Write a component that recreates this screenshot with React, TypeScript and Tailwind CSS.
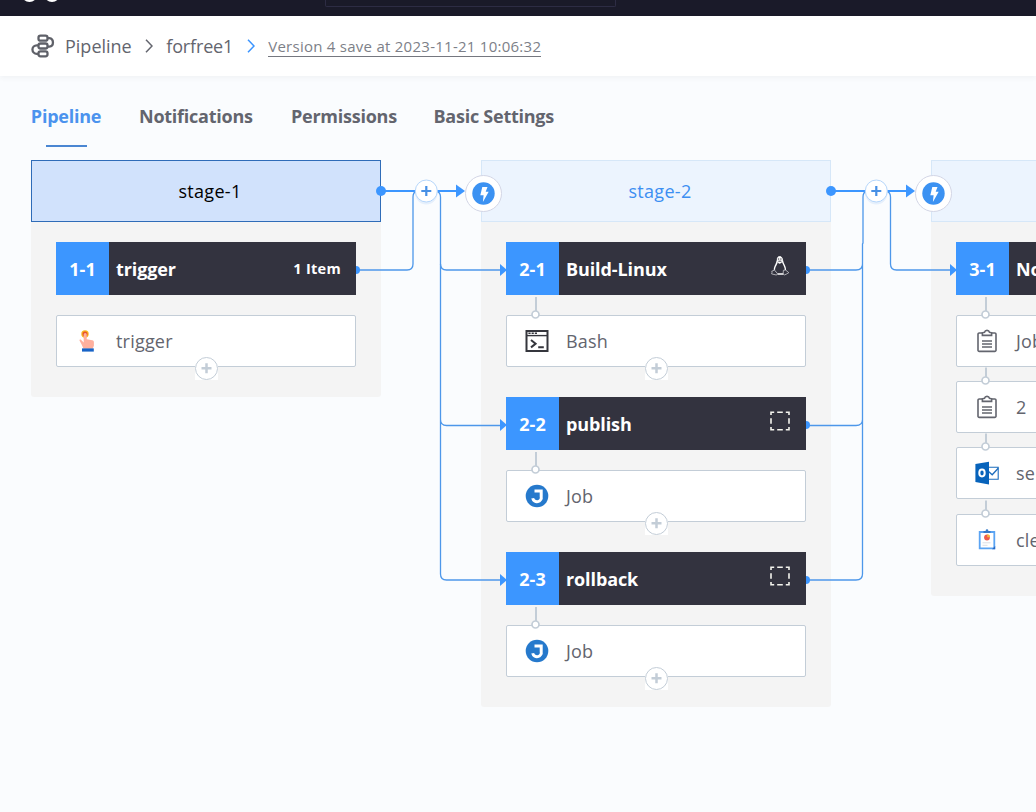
import React from "react";

type IconName = "touch" | "terminal" | "jenkins" | "clipboard" | "outlook" | "report";
type Step = { label: string; icon: IconName };
type Job = { id: string; name: string; note?: string; os?: "linux" | "box"; addable?: boolean; linked?: boolean; steps: Step[] };
type Stage = { name: string; active?: boolean; jobs: Job[] };

const stages: Stage[] = [
  {
    name: "stage-1",
    active: true,
    jobs: [{ id: "1-1", name: "trigger", note: "1 Item", addable: true, steps: [{ label: "trigger", icon: "touch" }] }],
  },
  {
    name: "stage-2",
    jobs: [
      { id: "2-1", name: "Build-Linux", os: "linux", addable: true, linked: true, steps: [{ label: "Bash", icon: "terminal" }] },
      { id: "2-2", name: "publish", os: "box", addable: true, linked: true, steps: [{ label: "Job", icon: "jenkins" }] },
      { id: "2-3", name: "rollback", os: "box", addable: true, linked: true, steps: [{ label: "Job", icon: "jenkins" }] },
    ],
  },
  {
    name: "stage-3",
    jobs: [
      {
        id: "3-1",
        name: "Notice",
        linked: true,
        steps: [
          { label: "Job", icon: "clipboard" },
          { label: "2", icon: "clipboard" },
          { label: "send", icon: "outlook" },
          { label: "clean", icon: "report" },
        ],
      },
    ],
  },
];

function PipelineLogo() {
  return (
    <svg width="24" height="24" viewBox="0 0 24 24" fill="none" stroke="#5f6169" strokeWidth="2.300">
      <rect x="7.500" y="1.700" width="9" height="5" rx="2" />
      <rect x="7.500" y="9.500" width="9" height="5" rx="2" />
      <rect x="7.500" y="17.300" width="9" height="5" rx="2" />
      <path d="M16.500 4.200h1.800a4.300 4.300 0 0 1 0 8.500h-1.800M7.500 11.300H5.700a4.250 4.250 0 0 0 0 8.500h1.800" />
    </svg>
  );
}

function Chevron({ blue }: { blue?: boolean }) {
  return (
    <svg width="8" height="14" viewBox="0 0 8 14" fill="none" stroke={blue ? "#3a94ff" : "#63656e"} strokeWidth="1.500">
      <path d="M1 .8L7 7l-6 6.200" />
    </svg>
  );
}

function StepIcon({ name }: { name: IconName }) {
  switch (name) {
    case "touch":
      return (
        <svg width="24" height="24" viewBox="0 0 24 24">
          <circle cx="10" cy="5" r="3.700" fill="#f9b41c" />
          <circle cx="10" cy="5" r="2.500" fill="#e8542c" />
          <path d="M8.700 5.400a1.500 1.500 0 0 1 3 0v4.800l5.600 1.100c1.200.3 1.600 1 1.600 2v3.400l-1.200 3H8.500L6.400 15 4.600 11.700c-.5-1 .8-1.500 1.600-.8l2.500 2.500z" fill="#ffb09e" />
          <path d="M7 19.400h11.800v3.200H7z" fill="#1763c7" />
        </svg>
      );
    case "terminal":
      return (
        <svg width="24" height="24" viewBox="0 0 24 24" fill="none" stroke="#35363d" strokeWidth="2">
          <path d="M1.500 2h21v20h-21z" />
          <path d="M1 6.600h22" strokeWidth="1.400" />
          <path d="M3.400 4.300h9" strokeWidth="1.600" strokeDasharray="2.200 1" />
          <path d="M6 11l4.600 3.700L6 18.400M13.200 18.200h5.600" />
        </svg>
      );
    case "jenkins":
      return (
        <svg width="24" height="24" viewBox="0 0 24 24">
          <circle cx="12" cy="12" r="11.300" fill="#2679cc" />
          <path d="M9.500 6.900h6.700v5.600a4.100 4.100 0 0 1-8.500 1.800" fill="none" stroke="#fff" strokeWidth="3" />
        </svg>
      );
    case "clipboard":
      return (
        <svg width="24" height="24" viewBox="0 0 24 24" fill="none" stroke="#63656e" strokeWidth="1.600">
          <path d="M7.400 4H4.200a1.200 1.200 0 0 0-1.200 1.200v16a1.200 1.200 0 0 0 1.200 1.200h15.600a1.200 1.200 0 0 0 1.200-1.200v-16A1.200 1.200 0 0 0 19.800 4h-3.200" />
          <path d="M7.400 6.400V3.800l2-.4c.4-1.300 1.300-2 2.600-2s2.200.7 2.600 2l2 .4v2.600z" />
          <path d="M7 12h10M7 15h10M7 18h10" />
        </svg>
      );
    case "outlook":
      return (
        <svg width="24" height="24" viewBox="0 0 24 24">
          <path d="M13 6.200h10.200v12H13z" fill="#fff" stroke="#1b6cbd" strokeWidth="1.100" />
          <path d="M13 10l4.200 3.800 6-6.600" fill="none" stroke="#1b6cbd" strokeWidth="1.300" />
          <path d="M.4 3L14 .8v22.700L.4 21z" fill="#0763bb" />
          <ellipse cx="7" cy="12" rx="2.700" ry="3.400" fill="none" stroke="#fff" strokeWidth="2" />
        </svg>
      );
    case "report":
      return (
        <svg width="24" height="24" viewBox="0 0 24 24">
          <path d="M4.700 4h14.600v16.400H4.700z" fill="#fff" stroke="#5ba4f3" strokeWidth="1.800" />
          <path d="M8.500 3h7v2h-7z" fill="#3679c9" />
          <circle cx="12" cy="2.600" r="1.300" fill="#3679c9" />
          <circle cx="12" cy="9.500" r="2.900" fill="#ef5b4c" />
          <path d="M12.200 9.300V6.200A3 3 0 0 1 15 9.300z" fill="#f6b73c" />
          <path d="M7.500 14.800h8M7.500 17.300h5" stroke="#dcdfe5" strokeWidth="1" />
          <path d="M17 21.300l3.200-3.200v3.200z" fill="#2769c5" />
        </svg>
      );
  }
}

function OsIcon({ os }: { os: "linux" | "box" }) {
  if (os === "box") {
    return (
      <svg className="mb-[6px]" width="20" height="20" viewBox="0 0 20 20" fill="none" stroke="#f4f4ee" strokeWidth="1.600">
        <path d="M1 4V1.300h3.200M7.200 1.300h5.600M15.800 1.300H19V4M19 7.200v5.600M19 16v2.700h-3.200M12.800 18.700H7.200M4.200 18.700H1V16M1 12.800V7.200" />
      </svg>
    );
  }
  return (
    <svg className="mb-[6px]" width="20" height="22" viewBox="0 0 20 22" fill="none" stroke="#fff" strokeWidth="1">
      <path d="M7.400 5.500C7 2.800 7.900 1.600 9.700 1.600s2.800 1.300 2.700 3.800z" fill="#fff" />
      <path d="M7.200 5.500c.2 2.200-1 3.500-2 5.800-.6 1.400-.9 2.600-.8 3.600M12.500 5.400c0 2.400 1.200 3.500 2.200 6 .7 1.700.9 2.400.7 3.600M7.500 19h5.800" strokeWidth="1.400" />
      <path d="M7.400 5.400l.5 2.100 1.700.9 1.900-.9.800-2.100z" fill="#fff" strokeWidth=".6" />
      <path d="M4.400 15l2.800 3.200c.5.9-.1 1.800-1.300 1.700l-4.300-1 .4-1.300-.2-1.500 1.200-.3zM15.600 15.100l-2.200.2-.3 3.900 1.300.7 1.800-.7 2.600-1.500-1.700-1.500z" strokeWidth=".75" stroke="#d5d5da" />
      <path d="M8.700 3.300v1.500M10.900 3.300v1.500M8.300 6.200h3" stroke="#33333f" strokeWidth=".9" />
    </svg>
  );
}

function JobView({ job }: { job: Job }) {
  return (
    <div className="w-[300px]">
      <div className="flex h-[53px] bg-[#33333f] text-[18px] font-bold text-white">
        <div className="flex w-[53px] shrink-0 items-center justify-center bg-[#3c96ff] pt-px">{job.id}</div>
        <div className="flex min-w-0 flex-1 items-center justify-between pr-[15px] pl-[7px]">
          <span className="pt-px tracking-[-0.100px] whitespace-nowrap">{job.name}</span>
          {job.note && <span className="pt-px text-[14.500px] tracking-[0.300px]">{job.note}</span>}
          {job.os && <span className="mr-[1px]"><OsIcon os={job.os} /></span>}
        </div>
      </div>
      <div className="flex flex-col gap-[14.200px] pt-5">
        {job.steps.map((step, i) => (
          <div key={i} className="relative flex h-[52px] items-center rounded-[2px] border border-[#c3cdd7] bg-white pl-[17.500px] text-[18px] text-[#63656e]">
            <StepIcon name={step.icon} />
            <span className="ml-[17.500px] pt-px tracking-[0.200px] whitespace-nowrap">{step.label}</span>
            {job.linked && (
              <svg className="absolute -top-5 left-[24px]" width="10" height="24" viewBox="0 0 10 24" fill="none" stroke="#c3cdd7" strokeWidth="2">
                <path d={i === 0 ? "M5 1v14" : "M5 5.500v9.500"} />
                <circle cx="4.500" cy="18.500" r="3.500" fill="#fff" strokeWidth="1.700" />
              </svg>
            )}
            {job.addable && (
              <svg className="absolute top-[40px] left-[138px] bg-white" width="23" height="24" viewBox="0 0 23 24" fill="#fff" stroke="#c3cdd7">
                <path d="M0 0h23v11H0z" stroke="none" />
                <circle cx="11.500" cy="12.500" r="11" />
                <path d="M6.500 12.200h10M11.500 7.200v10" strokeWidth="2.500" />
              </svg>
            )}
          </div>
        ))}
      </div>
    </div>
  );
}

function StageLink({ x }: { x: number }) {
  return (
    <g>
      <path d={`M${x} 191h77`} stroke="#3c96ff" strokeWidth="2" />
      <circle cx={x} cy="191" r="5" fill="#3c96ff" />
      <path d={`M${x + 75} 184.500l9 6.500-9 6.500z`} fill="#3c96ff" />
      <circle cx={x + 45.300} cy="193.500" r="11" fill="#d8e8fa" opacity=".6" />
      <circle cx={x + 45.300} cy="191" r="11" fill="#fff" stroke="#b5d6fb" />
      <path d={`M${x + 40.300} 191h10M${x + 45.300} 186v10`} stroke="#4790e5" strokeWidth="2.200" />
      <circle cx={x + 102.500} cy="193.500" r="18" fill="#fff" stroke="#d3d6e6" />
      <circle cx={x + 102.500} cy="193.500" r="11.200" fill="#3c92f2" />
      <path d={`M${x + 101.300} 187h5.200l-1.800 4.700h3l-5.800 10.300.7-6.800h-3.300z`} fill="#fff" />
    </g>
  );
}

function Connectors() {
  const stage2Rows = [270, 425, 580];
  return (
    <svg className="pointer-events-none absolute inset-0" width="1036" height="652" viewBox="0 160 1036 652" fill="none">
      <g stroke="#4d97ea" strokeWidth="1.300">
        <path d="M358 270h49q6 0 6-6v-67q0-5 4-6" />
        <path d="M436 191q4.500 1 4.500 6v67q0 6 6 6h54" />
        <path d="M440.500 264v155.500q0 6 6 6h54M440.500 419v155q0 6 6 6h54" />
        <path d="M807 270h49q6.500 0 6.500-6M807 425.500h49q6.500 0 6.500-6M807 580h49q6.500 0 6.500-6V244l.5-1v-46q0-5 4-6" />
        <path d="M886 191q4.500 1 4.500 6v67q0 6 6 6h54" />
      </g>
      <g fill="#3c96ff">
        <path d="M356 266a4 4 0 0 1 0 8z" />
        {stage2Rows.map((y) => (
          <g key={y}>
            <path d={`M500 ${y - 6}l7 6-7 6z`} />
            <path d={`M806 ${y - 4}a4 4 0 0 1 0 8z`} />
          </g>
        ))}
        <path d="M950 264l7 6-7 6z" />
      </g>
      <StageLink x={381} />
      <StageLink x={831} />
    </svg>
  );
}

function StageView({ stage }: { stage: Stage }) {
  return (
    <section className="w-[350px] shrink-0 rounded-b-[3px] bg-[#f4f4f4]">
      <h2
        className={
          stage.active
            ? "flex h-[62px] items-center justify-center border border-[#2f6cb8] bg-[#d1e2fc] pl-[8px] text-[18px] tracking-[0.300px] text-black"
            : "flex h-[62px] items-center justify-center border border-[#d6e7f8] bg-[#ecf4fe] pl-[8px] text-[18px] tracking-[0.300px] text-[#3c8ff2]"
        }
      >
        {stage.name}
      </h2>
      <div className="flex flex-col gap-[30px] px-[25px] pt-5 pb-[30px]">
        {stage.jobs.map((job) => (
          <JobView key={job.id} job={job} />
        ))}
      </div>
    </section>
  );
}

export default function App() {
  return (
    <div className="flex h-[812px] w-[1036px] flex-col overflow-hidden bg-[#fafcfe] font-['Open_Sans','Noto_Sans',sans-serif]">
      <header className="flex h-4 shrink-0 items-start overflow-hidden bg-[#1a1a29]">
        <svg width="325" height="4" viewBox="0 0 325 4" fill="#fff">
          <circle cx="29.500" cy="-6" r="8" />
          <circle cx="52" cy="-6" r="8" />
        </svg>
        <div className="h-[7px] w-[291px] rounded-b-[2px] border border-t-0 border-[#2d2c44]" />
      </header>
      <nav className="flex h-[60px] shrink-0 items-center bg-white pl-[30.500px] text-[18px] text-[#63656e] shadow-[0_2px_5px_0_rgba(51,60,72,0.05)]">
        <PipelineLogo />
        <span className="ml-[10.500px]">Pipeline</span>
        <span className="ml-[13.500px]"><Chevron /></span>
        <span className="ml-[13px] tracking-[-0.150px]">forfree1</span>
        <span className="ml-[14px]"><Chevron blue /></span>
        <span className="ml-[13px] border-b border-[#75777f] text-[15px] leading-[20px] tracking-[0.260px] text-[#7d7f88]">Version 4 save at 2023-11-21 10:06:32</span>
      </nav>
      <div className="flex h-[84px] shrink-0 items-start gap-[38px] pt-[27px] pl-[31px] text-[18px] leading-[26px] font-bold tracking-[-0.250px] text-[#63656e]">
        <div className="flex w-[70px] flex-col items-center text-[#4b93ee]">
          <span>Pipeline</span>
          <span className="mt-[16px] h-[2px] w-[41px] bg-[#4a86d2]" />
        </div>
        <span className="w-[114px] whitespace-nowrap">Notifications</span>
        <span className="w-[104.500px] whitespace-nowrap">Permissions</span>
        <span className="whitespace-nowrap">Basic Settings</span>
      </div>
      <main className="relative flex flex-1 items-start gap-[100px] overflow-hidden pl-[31px]">
        {stages.map((stage) => (
          <StageView key={stage.name} stage={stage} />
        ))}
        <Connectors />
      </main>
    </div>
  );
}
